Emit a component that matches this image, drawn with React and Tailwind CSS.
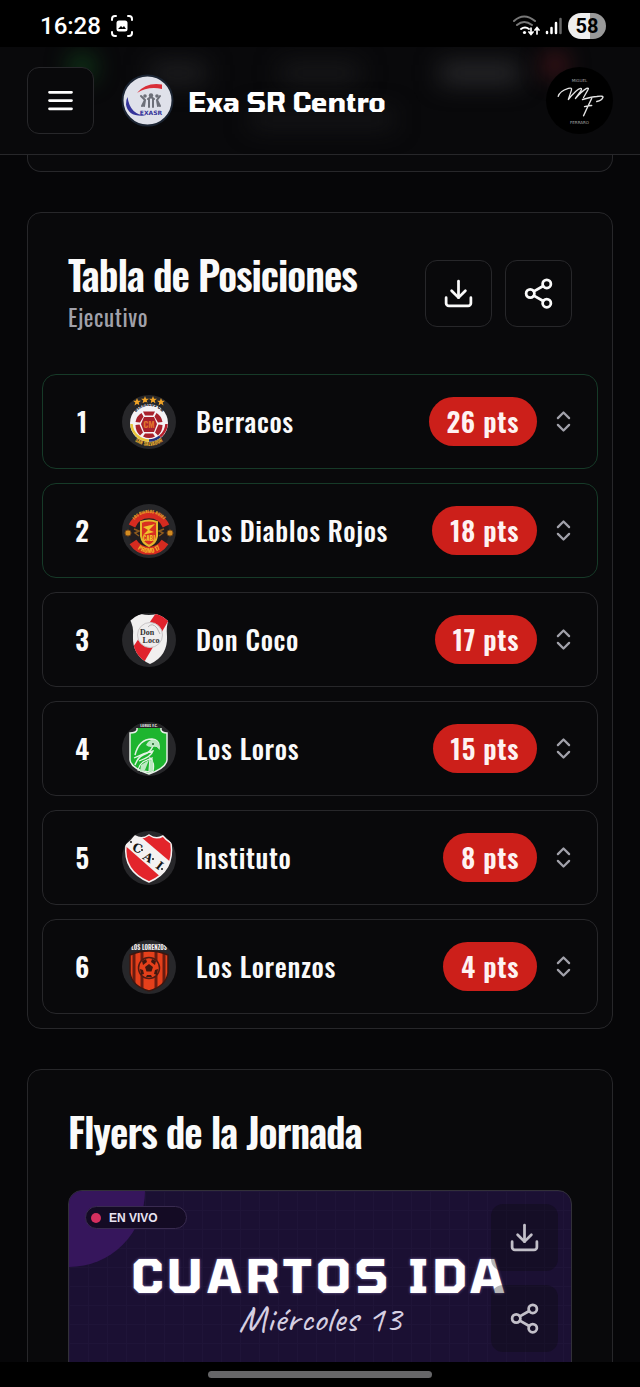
import React from 'react';
import { ChevronsUpDown, Download, Share2 } from 'lucide-react';

const narrow = "font-['Oswald','Roboto_Condensed','Roboto',sans-serif]";
const wide = "font-['Tomorrow','Oxanium','DejaVu_Sans',sans-serif]";
const script = "font-['Caveat','Lato',sans-serif]";

function BerracosCrest() {
  return (
    <svg viewBox="0 0 54 54" className="size-full" aria-hidden="true">
      <defs>
        <path id="berracos-top" d="M12 20a17 17 0 0 1 30 0" />
        <path id="berracos-bottom" d="M10 44q17 14 34 0" />
      </defs>
      <g fill="#f0a326">
        {[15, 23, 31, 39].map((x, i) => (
          <path
            key={x}
            transform={`translate(${x} ${i === 0 || i === 3 ? 7 : 5})`}
            d="M0-4 1.1-1.3 4-1.2 1.7.6 2.5 3.4 0 1.8-2.5 3.4-1.7.6-4-1.2-1.1-1.3z"
          />
        ))}
      </g>
      <circle cx="27" cy="28" r="19" fill="#f4f2f5" />
      <path d="M9.500 29a17.500 17.500 0 0 0 17.500 16.500" fill="none" stroke="#e8c53a" strokeWidth="2.500" />
      <path d="M27 45.500a17.500 17.500 0 0 0 11-4" fill="none" stroke="#24307e" strokeWidth="2.500" />
      <path d="M38 41.500a17.500 17.500 0 0 0 6.500-12.500" fill="none" stroke="#b51f2b" strokeWidth="2.500" />
      <g fill="#a8202b">
        <path d="M22 22h10l3 7-3 8H22l-3-8z" />
        <path d="M21 16.500h12L31 20.500h-8zM19.500 18l2 3.500-3.500 6-4.500-.5q1-6 6-9zM34.500 18l-2 3.500 3.500 6 4.500-.5q-1-6-6-9zM13.500 30l4-.5 3.500 8-3 3q-4.500-4-4.500-10.500zM40.500 30l-4-.5-3.500 8 3 3q4.500-4 4.500-10.500zM23 38.500h8l2 3q-6 3-12 0z" />
      </g>
      <text x="27" y="33" textAnchor="middle" fontSize="9" fontWeight="700" fill="#e0732b" className={narrow}>CM</text>
      <text fontSize="5" fontWeight="700" fill="#20242c" className={narrow}>
        <textPath href="#berracos-top" startOffset="50%" textAnchor="middle">BERRACOS CM</textPath>
      </text>
      <text fontSize="5" fontWeight="700" fill="#e2a72e" className={narrow}>
        <textPath href="#berracos-bottom" startOffset="50%" textAnchor="middle">SAN SALVADOR</textPath>
      </text>
    </svg>
  );
}

function DiablosCrest() {
  return (
    <svg viewBox="0 0 54 54" className="size-full" aria-hidden="true">
      <defs>
        <path id="diablos-top" d="M9 22a19 19 0 0 1 36 0" />
        <path id="diablos-bottom" d="M10 40q17 18 34 0" />
      </defs>
      <circle cx="27" cy="28" r="20" fill="#231d1f" />
      <path d="M10 22a18.500 18.500 0 0 1 34 0" fill="none" stroke="#d52b20" strokeWidth="7" />
      <path d="M11 38a19 19 0 0 0 32 0" fill="none" stroke="#d52b20" strokeWidth="8" />
      <circle cx="6" cy="29" r="3" fill="#d28c22" stroke="#7b4916" />
      <circle cx="48" cy="29" r="3" fill="#d28c22" stroke="#7b4916" />
      <path d="M12 25l5 2-4 2 4 3M42 25l-5 2 4 2-4 3" fill="none" stroke="#8d591d" strokeWidth="1.500" />
      <path d="M19 18q8-3 16 0v14q-1 7-8 10-7-3-8-10z" fill="#d92e20" stroke="#e5b62d" strokeWidth="2" />
      <path d="M21 23l12-3-6 6 5 2-11 3 5-5z" fill="#f0c12d" />
      <text x="27" y="37" textAnchor="middle" fontSize="6" fontWeight="700" fill="#f0c12d" className={narrow}>CABJ</text>
      <text fontSize="4" fontWeight="700" fill="#e6a128" className={narrow}>
        <textPath href="#diablos-top" startOffset="50%" textAnchor="middle">LOS DIABLOS ROJOS</textPath>
      </text>
      <text fontSize="6" fontWeight="700" fill="#f2b52c" className={narrow}>
        <textPath href="#diablos-bottom" startOffset="50%" textAnchor="middle">PROMO 17</textPath>
      </text>
    </svg>
  );
}

function DonCocoCrest() {
  return (
    <svg viewBox="0 0 54 54" className="size-full" aria-hidden="true">
      <defs>
        <clipPath id="coco-shield">
          <path d="M7 5q6-2 12-4 8 2 16 0 6 3 12 4-3 8-2 18 1 20-17 28Q10 43 11 23 12 13 7 5z" />
        </clipPath>
      </defs>
      <g clipPath="url(#coco-shield)">
        <path fill="#f1efef" d="M0 0h54v54H0z" />
        <path fill="#e0222c" d="M34 0h17L21 51 9 37z" />
      </g>
      <circle cx="28" cy="22" r="12.500" fill="#efedee" stroke="#c9c5c7" />
      <path d="M26 14q4-5 9 1l3 6" fill="none" stroke="#b4b2b3" strokeWidth="1" />
      <text x="25" y="22" textAnchor="middle" fontSize="8" fontWeight="700" fill="#303030" className="font-['Liberation_Serif',serif]">Don</text>
      <text x="29" y="30" textAnchor="middle" fontSize="8" fontWeight="700" fill="#303030" className="font-['Liberation_Serif',serif]">Loco</text>
    </svg>
  );
}

function LorosCrest() {
  return (
    <svg viewBox="0 0 54 54" className="size-full" aria-hidden="true">
      <path d="M15 5h24v3q1 3 6 3v27q-1 8-18 14Q9 46 8 38V11q6 0 7-3z" fill="#1db52f" stroke="#e7f0e8" strokeWidth="1.500" />
      <path d="M14 1h26v5H14z" fill="#242426" />
      <text x="27" y="5" textAnchor="middle" fontSize="4" fontWeight="700" fill="#d8d8d8" className={narrow}>LOROS F.C.</text>
      <path d="M13 33q4-16 17-16 8 1 7 9-2-3-6-2-3 7-10 9-5 2-8 10" fill="none" stroke="#e4f2e5" strokeWidth="1.500" />
      <path d="M24 23q3-6 9-5 5 2 4 8-4-3-8-1-3 0-5-2z" fill="#bce8c2" />
      <circle cx="31" cy="22" r="1" fill="#195b22" />
      <path d="M12 36q10-5 19-7-2 6-14 10M16 48q2-8 9-10l5-2-3 14zM28 36q5 4 3 13l-4 2z" fill="none" stroke="#e4f2e5" strokeWidth="1.300" />
      <path d="M19 43l8-5-4 10-5 2zM28 39l3-2v11l-4 3z" fill="#bce8c2" />
    </svg>
  );
}

function InstitutoCrest() {
  return (
    <svg viewBox="0 0 54 54" className="size-full" aria-hidden="true">
      <defs>
        <clipPath id="instituto-shield">
          <path d="M13 5q7 4 14-1 7 5 14 1 3 4 8 7 4 28-22 39Q1 40 4 14q6-4 9-9z" />
        </clipPath>
      </defs>
      <g clipPath="url(#instituto-shield)">
        <path fill="#e3242b" d="M0 0h54v54H0z" />
        <path fill="#f4f1f1" d="M-2 10 12 0l40 34-11 14z" />
      </g>
      <path d="M13 5q7 4 14-1 7 5 14 1 3 4 8 7 4 28-22 39Q1 40 4 14q6-4 9-9z" fill="none" stroke="#f4f1f1" strokeWidth="1.500" />
      <g fontSize="12" fontWeight="700" fill="#161616" textAnchor="middle" className="font-['DejaVu_Serif',serif]">
        <text transform="translate(14 21) rotate(22)">C</text>
        <text transform="translate(24 30) rotate(32)">A</text>
        <text transform="translate(35 38) rotate(38)">I</text>
      </g>
      <g fill="#161616">
        <circle cx="9" cy="11" r="1" />
        <circle cx="20" cy="19" r="1" />
        <circle cx="31" cy="28" r="1" />
        <circle cx="40" cy="38" r="1" />
      </g>
    </svg>
  );
}

function LorenzosCrest() {
  return (
    <svg viewBox="0 0 54 54" className="size-full" aria-hidden="true">
      <defs>
        <clipPath id="lorenzos-shield">
          <path d="M8 15q9-4 19-4t19 4v18q-2 13-19 18Q10 46 8 33z" />
        </clipPath>
      </defs>
      <g clipPath="url(#lorenzos-shield)">
        <path fill="#e5401b" d="M0 0h54v54H0z" />
        <path d="M12 8v44M20 8v44M34 8v44M42 8v44" stroke="#6b1c10" strokeWidth="3" />
      </g>
      <path d="M8 15q9-4 19-4t19 4v18q-2 13-19 18Q10 46 8 33z" fill="none" stroke="#3a1711" strokeWidth="1.500" />
      <circle cx="27" cy="28" r="10.500" fill="#e5401b" stroke="#521b12" strokeWidth="1.500" />
      <path d="m27 24 4 3-1.500 4.500h-5L23 27zM20 21l4-2 1 3-4 3zM34 21l-4-2-1 3 4 3zM18 29l3 1 1 4-3 1zM36 29l-3 1-1 4 3 1zM25 35h4l1 2h-6z" fill="#40170f" />
      <text x="27" y="10" textAnchor="middle" fontSize="6" fontWeight="700" fill="#f2eeee" className={narrow}>LOS LORENZOS</text>
    </svg>
  );
}

const teams = [
  { name: 'Berracos', points: 26, qualified: true, Crest: BerracosCrest },
  { name: 'Los Diablos Rojos', points: 18, qualified: true, Crest: DiablosCrest },
  { name: 'Don Coco', points: 17, Crest: DonCocoCrest },
  { name: 'Los Loros', points: 15, Crest: LorosCrest },
  { name: 'Instituto', points: 8, Crest: InstitutoCrest },
  { name: 'Los Lorenzos', points: 4, Crest: LorenzosCrest },
];

function StatusBar() {
  return (
    <div className="flex h-[47px] shrink-0 items-center justify-between bg-black pr-[34px] pl-10 pt-[5px] font-['Roboto',sans-serif] text-white">
      <div className="flex items-center gap-[10px]">
        <span className="text-[24px] leading-7 font-medium">16:28</span>
        <svg width="22" height="22" viewBox="0 0 22 22" fill="none" stroke="currentColor" strokeWidth="2" strokeLinecap="round" aria-hidden="true">
          <path d="M1 5V4a3 3 0 0 1 3-3h1M17 1h1a3 3 0 0 1 3 3v1M21 17v1a3 3 0 0 1-3 3h-1M5 21H4a3 3 0 0 1-3-3v-1" />
          <rect x="5.500" y="5.500" width="11" height="11" rx="2.500" fill="currentColor" stroke="none" />
          <path d="M7 14l3-3 1.500 1.500L13 11l2 3z" fill="#000" stroke="none" />
        </svg>
      </div>
      <div className="flex items-center gap-[5px]">
        <svg width="27" height="22" viewBox="0 0 27 22" fill="none" strokeWidth="2" strokeLinecap="round" aria-hidden="true">
          <path d="M1 6q10-9 21 0M4 10q7-6 15 0" stroke="#777" />
          <path d="M8 14q4-3 8 0" stroke="#fff" />
          <circle cx="11.500" cy="17.500" r="1.600" fill="#fff" />
          <path d="M18 13v6m-2-2 2 2.500 2-2.500M24 19v-6m-2 2 2-2.500 2 2.500" stroke="#fff" strokeWidth="1.700" />
        </svg>
        <svg width="18" height="20" viewBox="0 0 18 20" strokeWidth="2.500" strokeLinecap="round" aria-hidden="true">
          <path d="M2 16v1M6.500 12v5M11 7v10" stroke="#fff" />
          <path d="M15.500 3v14" stroke="#666" />
        </svg>
        <span className="flex h-[26px] w-[38px] items-center justify-center rounded-full bg-linear-to-r from-[#eeeeee] from-58% to-[#999999] to-58% text-[20px] leading-none font-bold text-black">
          58
        </span>
      </div>
    </div>
  );
}

function Header() {
  return (
    <header className="relative flex shrink-0 items-center overflow-hidden border-b border-[#27272a] bg-[#09090b] px-[27px] py-5">
      <div aria-hidden="true">
        <span className="absolute top-2 left-[70px] h-6 w-6 rounded-full bg-[#124a1e] blur-md" />
        <span className="absolute top-4 left-[150px] h-5 w-14 bg-[#202022] blur-md" />
        <span className="absolute top-4 left-[280px] h-5 w-20 bg-[#19191b] blur-md" />
        <span className="absolute top-4 left-[440px] h-5 w-20 bg-[#2b2b2e] blur-md" />
        <span className="absolute top-2 left-[545px] h-5 w-5 rounded-full bg-[#6b1c25] blur-md" />
        <span className="absolute top-16 left-[250px] h-4 w-36 bg-[#18181a] blur-md" />
      </div>
      <button type="button" aria-label="Abrir menú" className="relative flex size-[67px] items-center justify-center rounded-xl border border-[#27272a] bg-[#09090b] text-white">
        <svg width="33" height="33" viewBox="0 0 24 24" fill="none" stroke="currentColor" strokeWidth="2" strokeLinecap="round" aria-hidden="true">
          <path d="M4 6h16M4 12h16M4 18h16" />
        </svg>
      </button>
      <a href="#inicio" className="relative ml-[27px] flex items-center gap-[14px] text-white">
        <svg width="53" height="53" viewBox="0 0 53 53" aria-hidden="true">
          <circle cx="26.500" cy="26.500" r="25" fill="#dfe1ea" stroke="#1b2432" strokeWidth="2" />
          <path d="M16 19Q25 8 41 10.500v4.500Q27 12 16 19z" fill="#d92e38" />
          <path d="M6.500 23Q9 41 25 41.500q-3 0 0 0-18 2-20-11 0-5 1.500-7.500z" fill="#35349a" />
          <g stroke="#6d7079" strokeWidth="2" fill="none" strokeLinecap="round">
            <path d="M20 22l4 4-3 6M24 26l-1 6M39 22l-3 4 3 6M36 26l1 6M27 25q3-3 6 0M28 25v8M32 25v8" />
          </g>
          <g fill="#6d7079">
            <circle cx="24" cy="22" r="1.800" />
            <circle cx="30" cy="21.500" r="2.200" />
            <circle cx="36" cy="22" r="1.800" />
          </g>
          <text x="30" y="40.500" textAnchor="middle" fontSize="6" fontWeight="700" fill="#35349a" className="font-['DejaVu_Sans',sans-serif]">EXASR</text>
        </svg>
        <span className={`${wide} text-[27px] leading-8 font-bold`}>Exa SR Centro</span>
      </a>
      <button type="button" aria-label="Perfil" className="relative ml-auto size-[67px] rounded-full bg-black">
        <svg viewBox="0 0 66 66" className="size-full" fill="none" stroke="#e4e4e4" strokeLinecap="round" strokeLinejoin="round" aria-hidden="true">
          <path d="M12 29q1-5 10-8 4-1 3 2l-3 9q8-10 12-11 2 0 0 3l-5 7q6-7 11-10 3-1 1 2l-4 7" strokeWidth="1.300" />
          <path d="M36 32q10-3 14-3 7-1 6 1-1 3-6 4M45 31q-4 8-8 17M38 39q4-1 7-1" strokeWidth="1.400" />
          <text x="33" y="15" textAnchor="middle" fontSize="4" fill="#a5a5a5" stroke="none" className="font-['DejaVu_Sans',sans-serif]">MIGUEL</text>
          <text x="33" y="56" textAnchor="middle" fontSize="4" fill="#a5a5a5" stroke="none" className="font-['DejaVu_Sans',sans-serif]">FERRARO</text>
        </svg>
      </button>
    </header>
  );
}

function IconButton({ label, className, children }) {
  return (
    <button type="button" aria-label={label} className={`flex size-[67px] items-center justify-center rounded-xl ${className}`}>
      {children}
    </button>
  );
}

function TeamRow({ position, team }) {
  const { name, points, qualified, Crest } = team;
  return (
    <li>
      <button
        type="button"
        className={`flex h-[95px] w-full items-center rounded-[14px] border pr-5 text-[27px] leading-[35px] font-medium tracking-wide text-[#fafafa] ${
          qualified ? 'border-[#163a28]' : 'border-[#27272a]'
        }`}
      >
        <span className="w-[79px] shrink-0 text-center font-semibold">{position}</span>
        <span className="size-[54px] shrink-0 overflow-hidden rounded-full bg-[#27272a] tracking-normal">
          <Crest />
        </span>
        <span className="ml-5 flex-1 text-left whitespace-nowrap">{name}</span>
        <span className="mr-[13px] rounded-full bg-[#cc1f1a] px-[18px] py-[7px] font-semibold text-[#fef2f2]">
          {points} pts
        </span>
        <ChevronsUpDown size={27} className="shrink-0 text-[#a1a1aa]" />
      </button>
    </li>
  );
}

function Standings() {
  return (
    <section className="rounded-[14px] border border-[#27272a] bg-[#09090b]">
      <div className="flex items-center justify-between p-10">
        <div>
          <h2 className="text-[40px] leading-[42px] font-semibold tracking-tight whitespace-nowrap text-[#fafafa]">Tabla de Posiciones</h2>
          <p className="mt-1.5 text-[23px] leading-[33px] tracking-wide text-[#a1a1aa]">Ejecutivo</p>
        </div>
        <div className="flex gap-[13px] text-[#fafafa]">
          <IconButton label="Descargar tabla" className="border border-[#27272a]">
            <Download size={33} />
          </IconButton>
          <IconButton label="Compartir tabla" className="border border-[#27272a]">
            <Share2 size={33} />
          </IconButton>
        </div>
      </div>
      <ol className="flex flex-col gap-[14px] px-[14px] pb-[14px]">
        {teams.map((team, i) => (
          <TeamRow key={team.name} position={i + 1} team={team} />
        ))}
      </ol>
    </section>
  );
}

function Flyers() {
  return (
    <section className="rounded-[14px] border border-[#27272a] bg-[#09090b] p-10">
      <h2 className="mb-[38px] text-[40px] leading-[42px] font-semibold tracking-tight text-[#fafafa]">Flyers de la Jornada</h2>
      <article className="relative h-[640px] overflow-hidden rounded-[14px] border border-[#323039] bg-[#1b1033] bg-[linear-gradient(90deg,#1f1438_1px,transparent_1px),linear-gradient(#1f1438_1px,transparent_1px)] bg-size-[19px_19px]">
        <span className="absolute -top-[76px] -left-[76px] size-[152px] rounded-full bg-[#36165c]" />
        <div className="relative px-4 pt-[15px]">
          <p className="flex h-[23px] w-[102px] items-center gap-2 rounded-full border border-[#392b50] bg-[#140b24] px-[5px] font-['Liberation_Sans',sans-serif] text-[12px] leading-none font-bold text-[#e9e4f2]">
            <span className="size-[10px] rounded-full bg-[#d52f5f]" />
            EN VIVO
          </p>
          <h3 className={`${wide} mt-[18px] text-center text-[46px] leading-[56px] font-bold tracking-widest whitespace-nowrap text-white [text-shadow:0_0_3px_#8070a8]`}>
            CUARTOS IDA
          </h3>
          <p className={`${script} text-center text-[38px] leading-8 text-[#d5cfe2]`}>Miércoles 13</p>
        </div>
        <div className="absolute top-[13px] right-[13px] flex flex-col gap-[14px] text-[#fafafa] opacity-75">
          <IconButton label="Descargar flyer" className="bg-[#09090b]/40">
            <Download size={33} />
          </IconButton>
          <IconButton label="Compartir flyer" className="bg-[#09090b]/40">
            <Share2 size={33} />
          </IconButton>
        </div>
      </article>
    </section>
  );
}

export default function App() {
  return (
    <div className={`${narrow} flex h-screen flex-col bg-[#060608]`}>
      <StatusBar />
      <Header />
      <main className="flex min-h-0 flex-1 flex-col gap-10 overflow-y-auto px-[27px] [scrollbar-width:none] *:shrink-0">
        <div className="h-[17px] rounded-b-[14px] border-x border-b border-[#27272a] bg-[#09090b]" />
        <Standings />
        <Flyers />
      </main>
      <div className="flex h-[25px] shrink-0 items-center justify-center bg-black">
        <span className="h-[7px] w-[35%] rounded-full bg-[#666668]" />
      </div>
    </div>
  );
}
